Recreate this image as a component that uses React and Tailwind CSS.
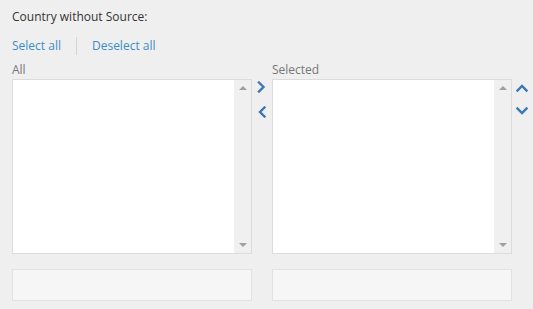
import React from 'react'

// Small chevron drawn as a thick stroked polyline
function Chevron({ dir }) {
  const pts = {
    right: '3,1.5 7.5,6 3,10.5',
    left: '8.5,1.5 4,6 8.5,10.5',
    up: '1.5,8.5 6,4 10.5,8.5',
    down: '1.5,3.5 6,8 10.5,3.5',
  }[dir]
  return (
    <svg width="12" height="12" viewBox="0 0 12 12" className="block">
      <polyline points={pts} fill="none" stroke="#3b78b5" strokeWidth="2.4" strokeLinecap="square" />
    </svg>
  )
}

function ListBox() {
  return (
    <div className="flex w-[240px] h-[175px] border border-[#dcdcdc] bg-white">
      <div className="flex-1" />
      <div className="w-[17px] bg-[#f0f0f0] flex flex-col items-center justify-between py-[6px]">
        <div className="w-0 h-0 border-x-[4px] border-x-transparent border-b-[4px] border-b-[#a0a0a0]" />
        <div className="w-0 h-0 border-x-[4px] border-x-transparent border-t-[4px] border-t-[#a0a0a0]" />
      </div>
    </div>
  )
}

export default function App() {
  return (
    <div className="w-[533px] h-[309px] bg-[#efefef] pl-[12px] pt-[8px] text-[12px] font-['Open_Sans',sans-serif]">
      <div className="text-[#333] leading-[18px]">Country without Source:</div>

      <div className="flex items-center mt-[11px] h-[18px] text-[#3a8ec6]">
        <span>Select all</span>
        <span className="w-px h-[18px] bg-[#d4d4d4] mx-[15px]" />
        <span>Deselect all</span>
      </div>

      <div className="flex mt-[7px]">
        <div>
          <div className="text-[#777] leading-[16px] mb-[1px]">All</div>
          <ListBox />
        </div>

        <div className="w-[20px] flex flex-col items-center pt-[19px] gap-[13px]">
          <Chevron dir="right" />
          <Chevron dir="left" />
        </div>

        <div>
          <div className="text-[#777] leading-[16px] mb-[1px]">Selected</div>
          <ListBox />
        </div>

        <div className="w-[20px] flex flex-col items-center pt-[20px] gap-[11px]">
          <Chevron dir="up" />
          <Chevron dir="down" />
        </div>
      </div>

      <div className="flex gap-[20px] mt-[15px]">
        <div className="w-[240px] h-[32px] bg-[#f6f6f6] border border-[#e2e2e2]" />
        <div className="w-[240px] h-[32px] bg-[#f6f6f6] border border-[#e2e2e2]" />
      </div>
    </div>
  )
}
